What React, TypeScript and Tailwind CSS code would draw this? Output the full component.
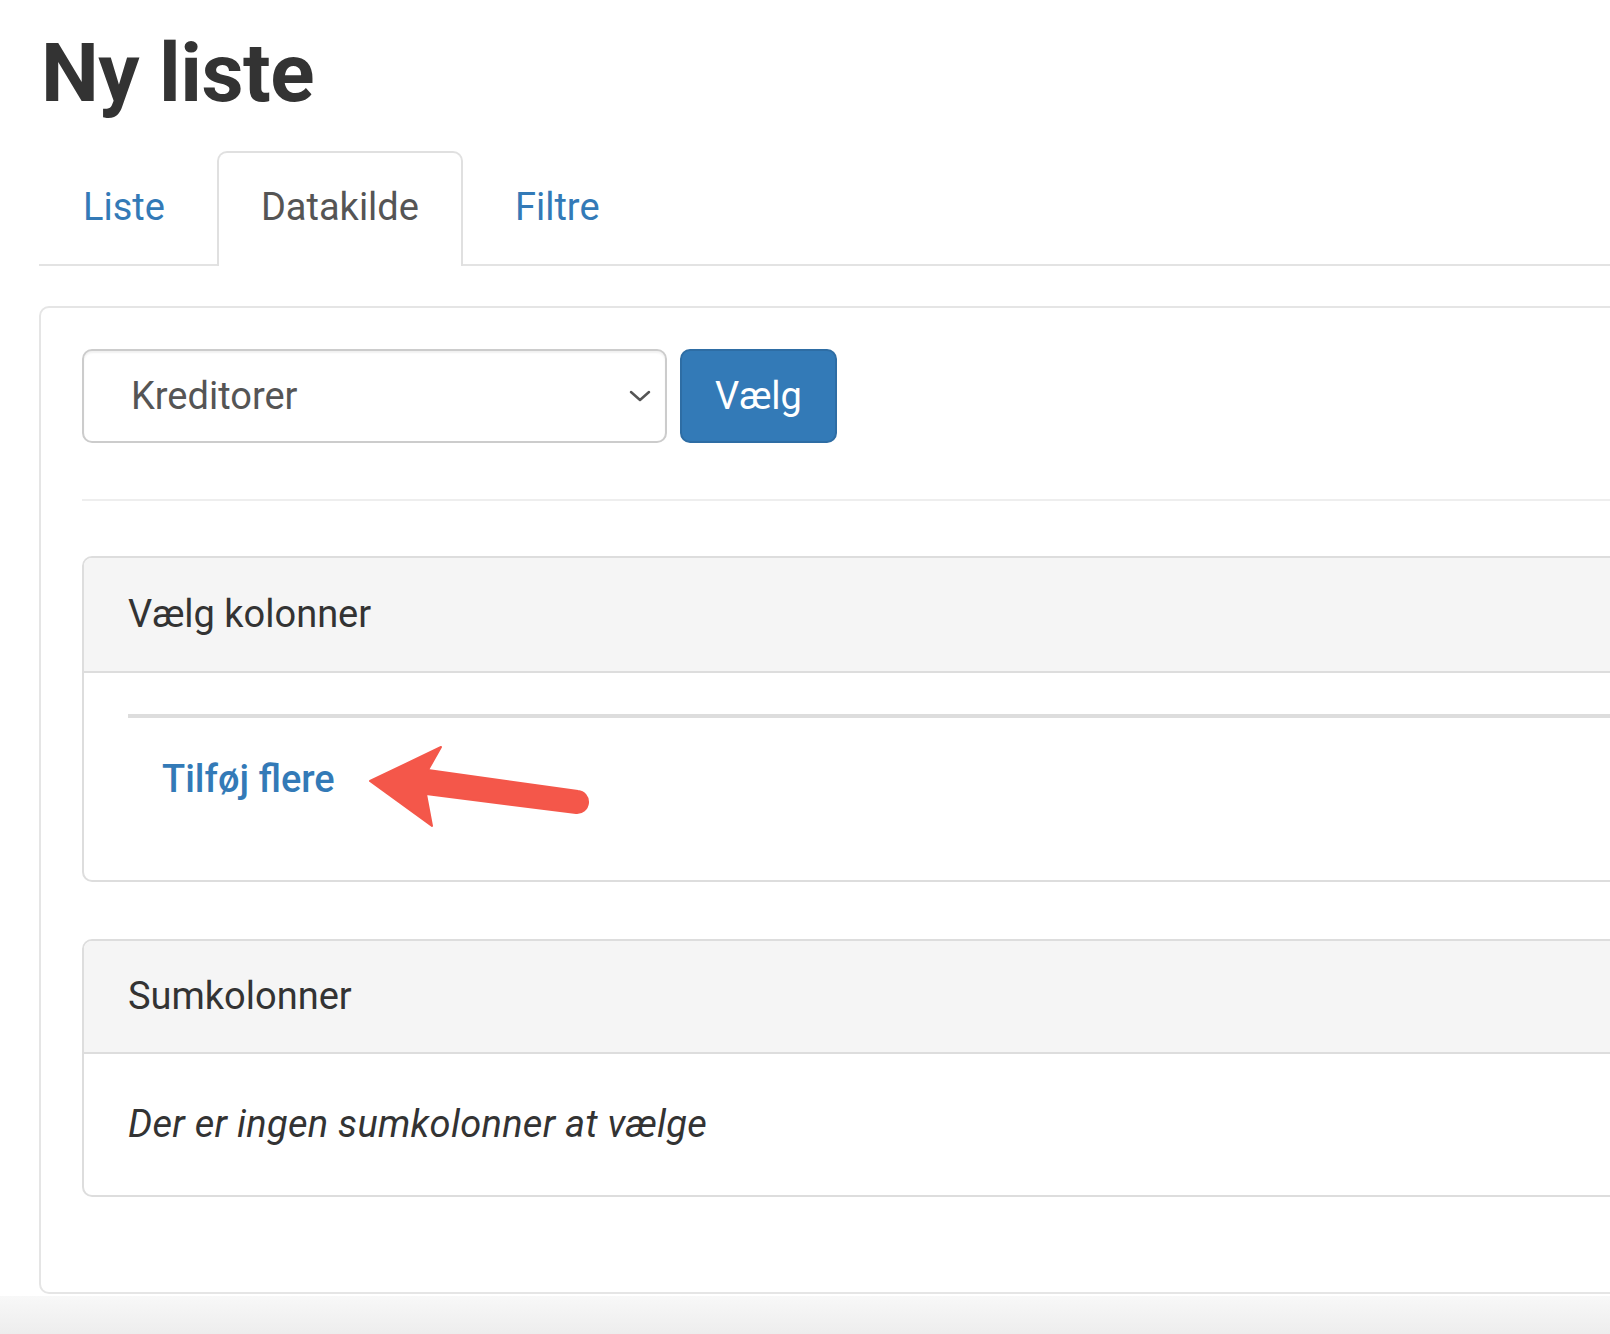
const tabs = [
  { label: "Liste", active: false },
  { label: "Datakilde", active: true },
  { label: "Filtre", active: false },
];

function Chevron() {
  return (
    <svg width="22" height="12" viewBox="0 0 22 12" fill="none" className="shrink-0">
      <path d="M2 2L11 10L20 2" stroke="#555" strokeWidth="2.5" strokeLinecap="round" strokeLinejoin="round" />
    </svg>
  );
}

export default function App() {
  return (
    <div
      className="relative w-[1610px] h-[1334px] overflow-hidden bg-white text-[#333]"
      style={{ fontFamily: "Roboto, 'Liberation Sans', sans-serif" }}
    >
      {/* Title */}
      <h1 className="ml-[41px] mt-[28px] text-[82px] leading-[90px] font-bold tracking-[-0.5px]">Ny liste</h1>

      {/* Tabs */}
      <div className="ml-[39px] mt-[33px] flex border-b-2 border-[#e3e3e3]">
        {tabs.map((t) => (
          <div
            key={t.label}
            className={
              t.active
                ? "mr-[8px] -mb-[2px] h-[115px] px-[42px] pb-[4px] flex items-center bg-white border-2 border-b-0 border-[#e0e0e0] rounded-t-[10px] text-[38px] text-[#555]"
                : "mr-[8px] h-[113px] px-[42px] flex items-center border-2 border-transparent text-[38px] text-[#337ab7]"
            }
          >
            {t.label}
          </div>
        ))}
      </div>

      {/* Outer panel */}
      <div className="ml-[39px] mt-[40px] w-[1700px] h-[988px] border-2 border-[#e5e5e5] rounded-[10px] pt-[41px] pl-[41px]">
        <div className="flex gap-[13px]">
          <div className="w-[585px] h-[94px] border-2 border-[#cccccc] rounded-[10px] flex items-center justify-between pl-[47px] pr-[14px] text-[38px] text-[#555] shadow-[inset_0_2px_2px_rgba(0,0,0,0.06)]">
            <span>Kreditorer</span>
            <Chevron />
          </div>
          <div className="w-[157px] h-[94px] bg-[#337ab7] border-2 border-[#2e6da4] rounded-[10px] flex items-center justify-center text-[38px] text-white">
            Vælg
          </div>
        </div>

        <div className="mt-[56px] border-t-2 border-[#eeeeee]" />

        {/* Vælg kolonner */}
        <div className="mt-[55px] border-2 border-[#dddddd] rounded-[10px] overflow-hidden">
          <div className="h-[115px] bg-[#f5f5f5] border-b-2 border-[#dddddd] flex items-center pl-[44px] text-[38px]">
            Vælg kolonner
          </div>
          <div className="pl-[44px] pt-[41px] h-[207px]">
            <div className="border-t-4 border-[#dddddd]" />
            <div className="mt-[34px] ml-[34px] text-[38px] leading-[54px] font-medium text-[#337ab7]">Tilføj flere</div>
          </div>
        </div>

        {/* Sumkolonner */}
        <div className="mt-[57px] border-2 border-[#dddddd] rounded-[10px] overflow-hidden">
          <div className="h-[113px] bg-[#f5f5f5] border-b-2 border-[#dddddd] flex items-center pl-[44px] text-[38px]">
            Sumkolonner
          </div>
          <div className="h-[141px] flex items-center pl-[44px] text-[38px] italic tracking-[0.3px]">
            Der er ingen sumkolonner at vælge
          </div>
        </div>
      </div>

      {/* bottom bar */}
      <div className="mt-[2px] h-[42px] bg-gradient-to-b from-[#f8f8f8] to-[#ececec]" />

      {/* annotation arrow */}
      <svg className="absolute left-0 top-0 pointer-events-none" width="1610" height="1334" viewBox="0 0 1610 1334">
        <path
          d="M370 781 L441 747 L428 770 L578 791 A11 11 0 0 1 576 813 L426 794 L432 826 Z"
          fill="#f4574a"
          stroke="#f4574a"
          strokeWidth="2"
          strokeLinejoin="round"
        />
      </svg>
    </div>
  );
}
